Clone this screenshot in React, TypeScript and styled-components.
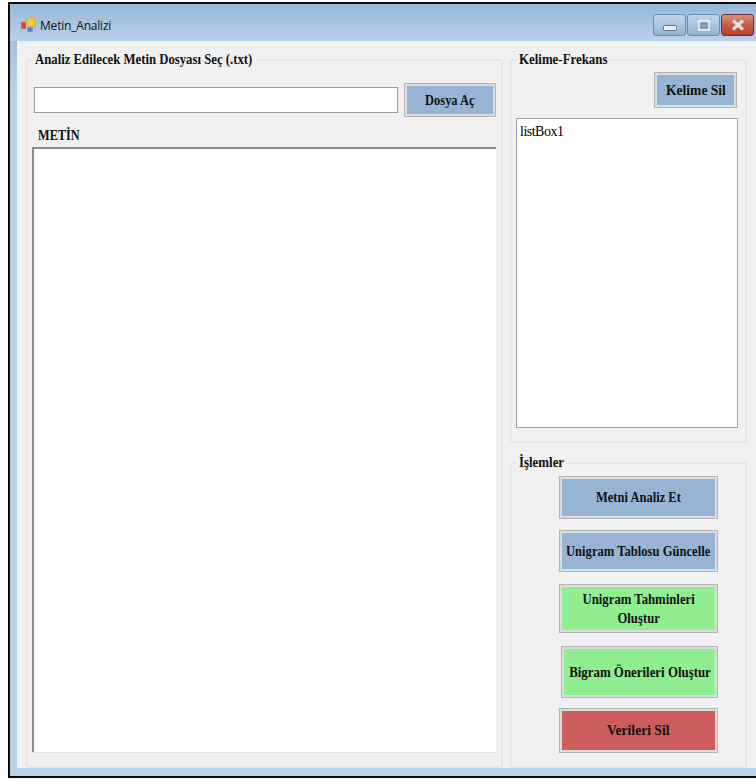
import { createGlobalStyle, styled } from "styled-components";

const GlobalStyle = createGlobalStyle`
  html, body {
    margin: 0;
    padding: 0;
    background: #fff;
    overflow: hidden;
  }
`;

const Page = styled.div`
  width: 756px;
  height: 780px;
  padding: 2px 0 2px 8px;
  box-sizing: border-box;
`;

const Window = styled.div`
  height: 100%;
  box-sizing: border-box;
  border: solid #0a0a0a;
  border-width: 2px 0 2px 2px;
  display: flex;
  flex-direction: column;
  background: linear-gradient(#9ab6d4, #b9d1ea 12%);
`;

const TitleBar = styled.div`
  height: 37px;
  flex: none;
  display: flex;
  align-items: flex-start;
  padding: 13px 2px 0 10px;
  box-sizing: border-box;
  gap: 4px;
  background: linear-gradient(#9ab6d4, #b9d1ea);
`;

const Title = styled.span`
  font: 12px/20px "Open Sans", "Liberation Sans", sans-serif;
  color: #111;
  letter-spacing: -0.2px;
  margin-top: -1px;
`;

const Controls = styled.div`
  margin: -3px 0 0 auto;
  display: flex;
  gap: 1px;
`;

const Control = styled.div<{ $close?: boolean }>`
  width: 33px;
  height: 22px;
  box-sizing: border-box;
  border: 1px solid ${(p) => (p.$close ? "#6b3040" : "#7089a6")};
  border-radius: 3px;
  display: flex;
  align-items: center;
  justify-content: center;
  background: ${(p) =>
    p.$close
      ? "linear-gradient(#d9907e, #c65a43 55%, #b5402c)"
      : "linear-gradient(#c0d5ea, #aac4df 55%, #93b0cf)"};
  svg.min {
    margin-top: 6px;
  }
`;

const Client = styled.div`
  flex: 1;
  min-height: 0;
  margin: 0 0 8px 7px;
  padding: 11px 9px 0 9px;
  background: #f0f0f0;
  display: grid;
  grid-template-columns: 477px 237px;
  column-gap: 7px;
`;

const LeftColumn = styled.div`
  display: flex;
  flex-direction: column;
  min-height: 0;
`;

const RightColumn = styled.div`
  display: flex;
  flex-direction: column;
  gap: 12px;
`;

const Group = styled.fieldset<{ $grow?: boolean; $height?: number }>`
  margin: 0;
  padding: 0;
  min-width: 0;
  border: 2px solid #e6e6e6;
  border-radius: 2px;
  box-sizing: border-box;
  ${(p) => (p.$height ? `height: ${p.$height}px;` : "")}
  ${(p) => (p.$grow ? "flex: 1;" : "")}
`;

const Legend = styled.legend`
  margin-left: 5px;
  padding: 0 2px;
  font: bold 14px/16px "Liberation Serif", serif;
  color: #111;
`;

// Narrowed text; $trim gives back the width the scale leaves empty on the right
const Squeezed = styled.span<{ $scale: number; $trim?: number }>`
  display: inline-block;
  flex: none;
  transform: scaleX(${(p) => p.$scale});
  transform-origin: ${(p) => (p.$trim === undefined ? "center" : "left center")};
  margin-right: ${(p) => -(p.$trim ?? 0)}px;
`;

const FileRow = styled.div`
  display: flex;
  align-items: center;
  gap: 6px;
  padding: 15px 5px 0 6px;
`;

const PathInput = styled.div`
  width: 364px;
  height: 26px;
  box-sizing: border-box;
  background: #fff;
  border: 1px solid #9a9a9a;
`;

const Button = styled.button<{ $color: string; $width: number; $height: number; $left: number }>`
  width: ${(p) => p.$width}px;
  height: ${(p) => p.$height}px;
  margin: 0 0 0 ${(p) => p.$left}px;
  padding: 0;
  flex: none;
  box-sizing: border-box;
  display: flex;
  align-items: center;
  justify-content: center;
  text-align: center;
  background: ${(p) => p.$color};
  border: 3px solid #dcdcdc;
  outline: 1px solid #b4b4b4;
  outline-offset: -1px;
  font: bold 14px/19px "Liberation Serif", serif;
  color: #111;
  white-space: pre;
`;

const TextLabel = styled.div`
  font: bold 14px/16px "Liberation Serif", serif;
  color: #111;
  margin: 11px 0 3px 10px;
`;

const TextArea = styled.div`
  height: 605px;
  margin: 0 5px 0 4px;
  box-sizing: border-box;
  background: #fff;
  border: solid #8c8c8c;
  border-width: 2px 0 0 2px;
  box-shadow: 0 1px 0 #e4e4e4;
`;

const DeleteRow = styled.div`
  display: flex;
  justify-content: flex-end;
  padding: 4px 8px 0 0;
`;

const ListBox = styled.div`
  height: 310px;
  margin: 10px 7px 0 4px;
  padding: 4px 3px;
  box-sizing: border-box;
  background: #fff;
  border: 1px solid #9ca3ad;
  font: 14px/17px "Liberation Serif", serif;
  letter-spacing: -0.5px;
  color: #000;
`;

const ActionStack = styled.div`
  display: flex;
  flex-direction: column;
  padding-top: 5px;
`;

const blue = "#98b4d4";
const green = "#90ee90";
const red = "#cd5c5c";

const actions = [
  { text: "Metni Analiz Et", color: blue, width: 159, height: 43, left: 47, gap: 0, scale: 0.895 },
  { text: "Unigram Tablosu Güncelle", color: blue, width: 159, height: 42, left: 47, gap: 11, scale: 0.9 },
  { text: "Unigram Tahminleri\nOluştur", color: green, width: 159, height: 49, left: 47, gap: 12, scale: 0.91 },
  { text: "Bigram Önerileri Oluştur", color: green, width: 157, height: 52, left: 49, gap: 13, scale: 0.92 },
  { text: "Verileri Sil", color: red, width: 159, height: 45, left: 47, gap: 10, scale: 0.97 },
];

function AppIcon() {
  return (
    <svg width="16" height="16" viewBox="0 0 16 16" aria-hidden="true">
      <rect x="1" y="5" width="5" height="7" fill="#d8432f" stroke="#b9b9b9" strokeWidth="0.5" />
      <rect x="7" y="10" width="6" height="5" fill="#4d86d8" stroke="#c7d6ea" strokeWidth="0.5" />
      <rect x="7" y="1" width="8" height="8.5" fill="#f4cb3f" stroke="#c9a32f" strokeWidth="0.6" />
    </svg>
  );
}

export default function App() {
  return (
    <Page>
      <GlobalStyle />
      <Window>
        <TitleBar>
          <AppIcon />
          <Title>Metin_Analizi</Title>
          <Controls>
            <Control>
              <svg className="min" width="14" height="6" viewBox="0 0 14 6" aria-hidden="true">
                <rect x="0.5" y="0.5" width="13" height="5" rx="1" fill="#e6edf5" stroke="#5f7187" />
              </svg>
            </Control>
            <Control>
              <svg width="12" height="11" viewBox="0 0 12 11" aria-hidden="true">
                <rect x="1" y="1" width="10" height="9" fill="none" stroke="#dfe8f2" strokeWidth="2" />
                <rect x="3" y="3" width="6" height="5" fill="#92a9c2" stroke="#5f7187" strokeWidth="0.8" />
              </svg>
            </Control>
            <Control $close>
              <svg width="14" height="12" viewBox="0 0 14 12" aria-hidden="true">
                <path d="M2 1.5 12 10.5M12 1.5 2 10.5" stroke="#e4e0dd" strokeWidth="3.2" />
              </svg>
            </Control>
          </Controls>
        </TitleBar>
        <Client>
          <LeftColumn>
            <Group $grow>
              <Legend>
                <Squeezed $scale={0.91} $trim={21}>
                  Analiz Edilecek Metin Dosyası Seç (.txt)
                </Squeezed>
              </Legend>
              <FileRow>
                <PathInput />
                <Button $color={blue} $width={92} $height={34} $left={0}>
                  <Squeezed $scale={0.89}>Dosya Aç</Squeezed>
                </Button>
              </FileRow>
              <TextLabel>
                <Squeezed $scale={0.88} $trim={6}>
                  METİN
                </Squeezed>
              </TextLabel>
              <TextArea />
            </Group>
          </LeftColumn>
          <RightColumn>
            <Group $height={391}>
              <Legend>
                <Squeezed $scale={0.92} $trim={8}>
                  Kelime-Frekans
                </Squeezed>
              </Legend>
              <DeleteRow>
                <Button $color={blue} $width={83} $height={36} $left={0}>
                  <Squeezed $scale={0.97}>Kelime Sil</Squeezed>
                </Button>
              </DeleteRow>
              <ListBox>listBox1</ListBox>
            </Group>
            <Group $grow>
              <Legend>
                <Squeezed $scale={0.92} $trim={4}>
                  İşlemler
                </Squeezed>
              </Legend>
              <ActionStack>
                {actions.map((a) => (
                  <Button
                    key={a.text}
                    $color={a.color}
                    $width={a.width}
                    $height={a.height}
                    $left={a.left}
                    style={{ marginTop: a.gap }}
                  >
                    <Squeezed $scale={a.scale}>{a.text}</Squeezed>
                  </Button>
                ))}
              </ActionStack>
            </Group>
          </RightColumn>
        </Client>
      </Window>
    </Page>
  );
}
